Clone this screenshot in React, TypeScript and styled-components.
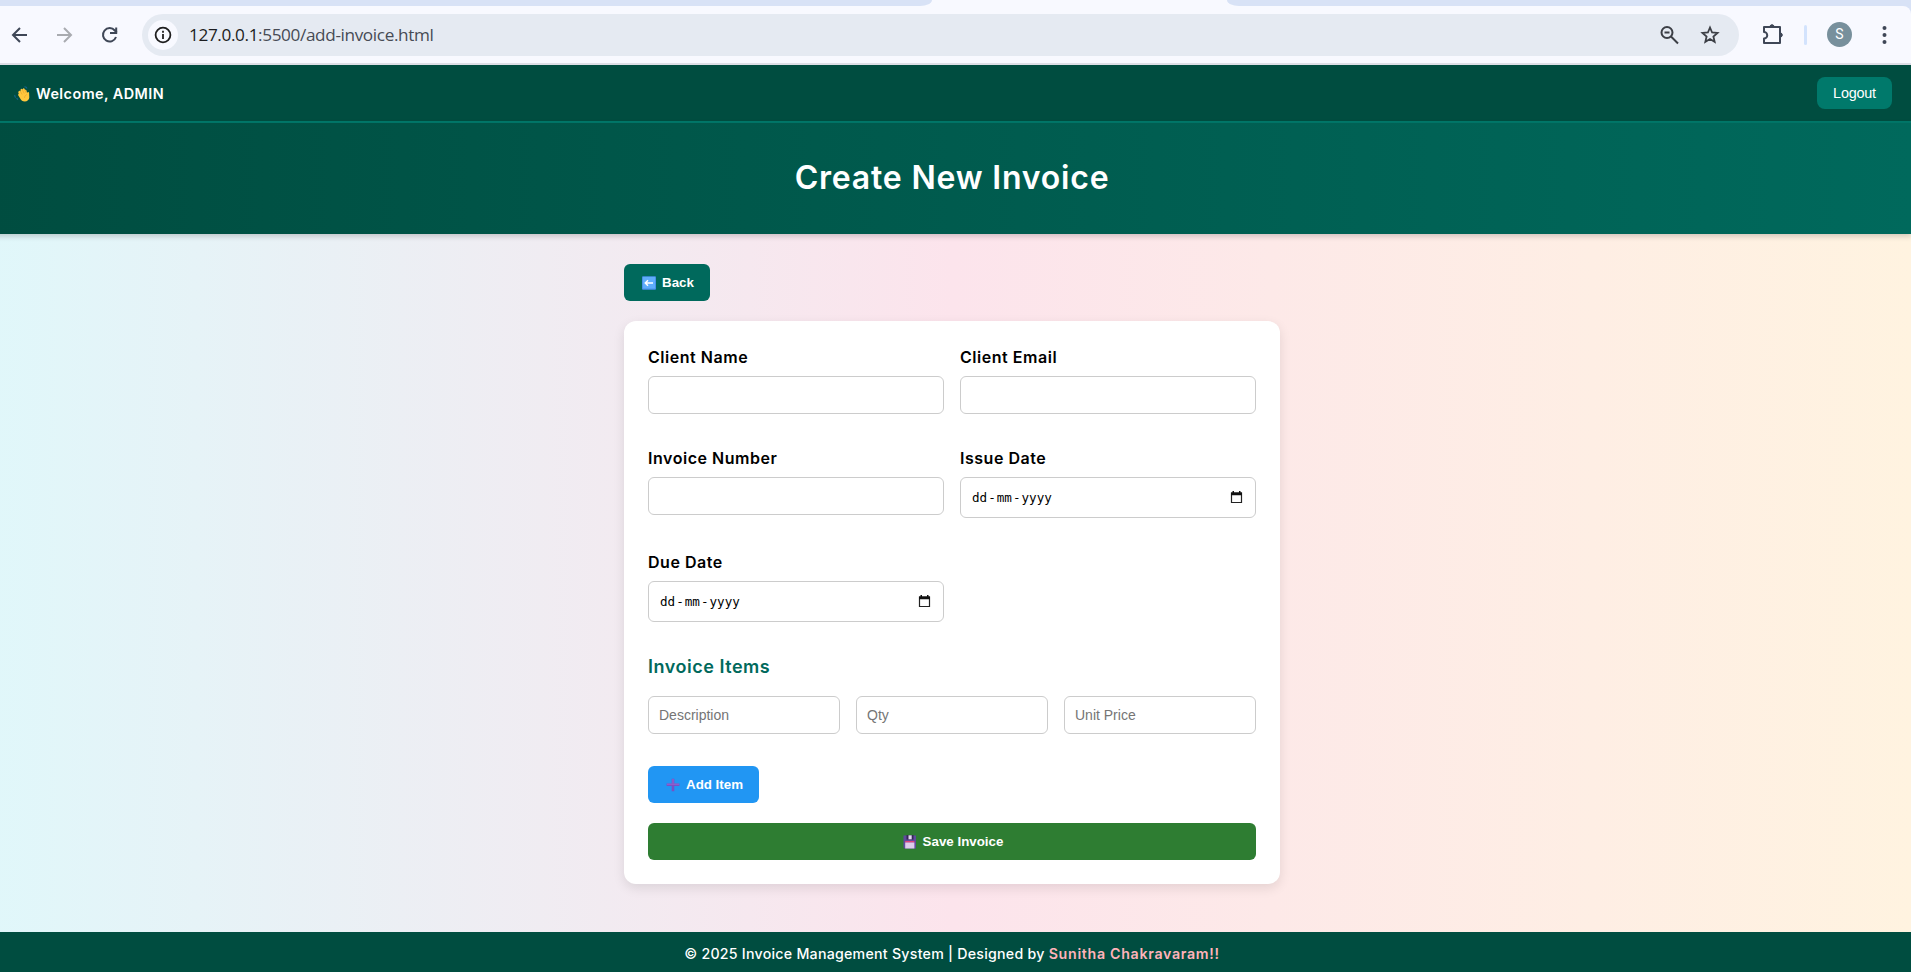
import React from 'react';
import styled, { createGlobalStyle } from 'styled-components';

const Global = createGlobalStyle`
  *, *::before, *::after { box-sizing: border-box; }
  body { margin: 0; overflow: hidden; background: #004d40; }
  button, input { margin: 0; }
`;

const display = "Inter, 'Liberation Sans', sans-serif";
const control = "'Liberation Sans', Arial, sans-serif";

const Window = styled.div`
  width: 100vw;
  height: 100vh;
  overflow: hidden;
  display: flex;
  flex-direction: column;
  background: #d8e2f6;
`;

const TabStrip = styled.div`
  height: 6px;
  flex: none;
  display: flex;
  justify-content: space-between;
  background: #f8f9ff;
`;

const InactiveTabs = styled.div<{ $width: number; $side: 'left' | 'right' }>`
  width: ${p => p.$width}px;
  background: #d8e2f6;
  border-radius: ${p => (p.$side === 'left' ? '0 0 14px 0 / 0 0 7px 0' : '0 0 0 14px / 0 0 0 7px')};
`;

const Toolbar = styled.div`
  height: 57px;
  flex: none;
  display: flex;
  align-items: center;
  padding: 0 24px 0 7px;
  background: #f8f9ff;
  border-top-right-radius: 8px;
`;

const ToolbarEdge = styled.div`
  height: 2px;
  flex: none;
  background: #dddee6;
`;

const NavIcons = styled.div`
  display: flex;
  gap: 19px;
  width: 135px;
  flex: none;
`;

const AddressBar = styled.div`
  flex: none;
  width: 1597px;
  height: 42px;
  display: flex;
  align-items: center;
  border-radius: 21px;
  background: #e5eaf2;
  padding: 0 17px 0 6px;
`;

const InfoBadge = styled.div`
  width: 30px;
  height: 30px;
  border-radius: 50%;
  background: #f8f9ff;
  display: flex;
  align-items: center;
  justify-content: center;
`;

const Url = styled.span`
  flex: 1;
  margin-left: 11px;
  font: 17.2px/24px 'Open Sans', 'Noto Sans', sans-serif;
  letter-spacing: -0.38px;
  color: #474b55;
  white-space: nowrap;
  b { font-weight: 400; color: #1c1d21; }
`;

const BarIcons = styled.div`
  display: flex;
  gap: 16px;
`;

const Extensions = styled.div`
  flex: 1;
  display: flex;
  align-items: center;
  justify-content: flex-end;
`;

const Divider = styled.div`
  width: 3px;
  height: 20px;
  border-radius: 2px;
  margin: 0 20px 0 20px;
  background: #d3e3fd;
`;

const Avatar = styled.div`
  width: 25px;
  height: 25px;
  border-radius: 50%;
  margin-right: 30px;
  background: #78909c;
  color: #fff;
  text-align: center;
  font: 14px/25px Roboto, sans-serif;
`;

const Page = styled.div`
  width: 1920px;
  flex: 1;
  margin-left: -8px;
  display: flex;
  flex-direction: column;
  background: linear-gradient(to right, #e0f7fa, #fce4ec, #fff3e0);
`;

const TopBar = styled.div`
  height: 58px;
  flex: none;
  display: flex;
  align-items: center;
  justify-content: space-between;
  padding: 0 20px;
  background: #004d40;
  border-bottom: 2px solid #00796b;
`;

const Welcome = styled.div`
  display: flex;
  align-items: center;
  gap: 6px;
  padding: 2px 0 0 2px;
  color: #fff;
  font: 600 14.4px/22px ${display};
  letter-spacing: 0.45px;
`;

const Logout = styled.button`
  width: 75px;
  height: 32px;
  border: 0;
  border-radius: 8px;
  background: #00796b;
  color: #fff;
  font: 14.4px/18px ${control};
  letter-spacing: -0.2px;
  padding: 0;
`;

const Banner = styled.header`
  height: 111px;
  flex: none;
  display: flex;
  align-items: center;
  justify-content: center;
  padding-bottom: 2px;
  background: linear-gradient(to right, #004d40, #00695c);
  box-shadow: 0 2px 6px rgba(0, 0, 0, 0.2);
`;

const Title = styled.h1`
  margin: 0;
  color: #fff;
  font: 600 32px/48px ${display};
  letter-spacing: 0.8px;
`;

const Main = styled.main`
  width: 656px;
  flex: 1;
  margin: 0 auto;
  padding-top: 30px;
  display: flex;
  flex-direction: column;
  align-items: flex-start;
`;

const Button = styled.button<{ $color: string; $wide?: boolean }>`
  height: 37px;
  flex: none;
  width: ${p => (p.$wide ? '100%' : 'auto')};
  display: flex;
  align-items: center;
  justify-content: center;
  gap: 6px;
  padding: 1px 16px 0 18px;
  border: 0;
  border-radius: 6px;
  background: ${p => p.$color};
  color: #fff;
  font: bold 13.333px/16px ${control};
`;

const Card = styled.form`
  width: 656px;
  margin-top: 20px;
  height: 563px;
  padding: 24px;
  display: flex;
  flex-direction: column;
  align-items: flex-start;
  background: #fff;
  border-radius: 12px;
  box-shadow: 0 4px 12px rgba(0, 0, 0, 0.1);
`;

const FieldGrid = styled.div`
  width: 100%;
  display: grid;
  grid-template-columns: 1fr 1fr;
  gap: 32px 16px;
`;

const Field = styled.label`
  display: flex;
  flex-direction: column;
  gap: 7px;
  color: #000;
  font: 600 16px/24px ${display};
  letter-spacing: 0.53px;
`;

const Input = styled.input`
  width: 100%;
  height: 38px;
  padding: 0 10px;
  border: 1px solid #ccc;
  border-radius: 6px;
  background: #fff;
  outline: 0;
  font: 14px/16px ${control};
  &::placeholder { color: #757575; opacity: 1; }
`;

const DateBox = styled.div`
  height: 41px;
  display: flex;
  align-items: center;
  padding: 0 12px 0 10px;
  border: 1px solid #ccc;
  border-radius: 6px;
  font: 12.6px/16px 'DejaVu Sans Mono', monospace;
  letter-spacing: 0;
  svg { margin-left: auto; }
`;

const DatePart = styled.span`
  padding: 0 1px;
`;

const SectionTitle = styled.h3`
  margin: 32px 0 16px;
  color: #00695c;
  font: 600 18px/26px ${display};
  letter-spacing: 0.52px;
`;

const ItemRow = styled.div`
  width: 100%;
  display: grid;
  grid-template-columns: repeat(3, 1fr);
  gap: 16px;
  margin-bottom: 32px;
`;

const SaveRow = styled.div`
  width: 100%;
  margin-top: 20px;
`;

const Footer = styled.footer`
  height: 40px;
  flex: none;
  padding-top: 11px;
  background: #004d40;
  color: #fff;
  text-align: center;
  font: 500 14.2px/22px ${display};
  letter-spacing: 0.25px;
  b { color: #ffb3ba; font-weight: 600; letter-spacing: 0.7px; }
`;

const strokeIcon = { fill: 'none', stroke: '#3f4757', strokeWidth: 2 } as const;

const BackIcon = () => (
  <svg width="26" height="26" viewBox="0 0 26 26" {...strokeIcon}><path d="M20 13H6M13 6l-7 7 7 7" /></svg>
);
const ForwardIcon = () => (
  <svg width="26" height="26" viewBox="0 0 26 26" {...strokeIcon} stroke="#a9abb0"><path d="M5 13h14M12 6l7 7-7 7" /></svg>
);
const ReloadIcon = () => (
  <svg width="26" height="26" viewBox="0 0 26 26" {...strokeIcon}>
    <path d="M19 15a6.700 6.700 0 1 1-1.200-6.500L20 10.800M19.200 5.500v5.500H13" />
  </svg>
);
const InfoIcon = () => (
  <svg width="18" height="18" viewBox="0 0 18 18" fill="none" stroke="#1f1f1f" strokeWidth="1.8">
    <circle cx="9" cy="9" r="7.400" /><path d="M9 8v5M9 4.800v2" />
  </svg>
);
const ZoomOutIcon = () => (
  <svg width="24" height="24" viewBox="0 0 24 24" fill="none" stroke="#3c3f46" strokeWidth="2">
    <circle cx="9" cy="9.500" r="5.500" /><path d="M13 13.500l7 7M6.500 9.500h5" />
  </svg>
);
const StarIcon = () => (
  <svg width="24" height="24" viewBox="0 0 24 24" fill="none" stroke="#3c3f46" strokeWidth="1.800">
    <path d="M12 4.500l2.100 5 5.400.450-4.100 3.550 1.250 5.250L12 15.950l-4.650 2.800L8.600 13.500 4.500 9.950l5.400-.450z" />
  </svg>
);
const PuzzleIcon = () => (
  <svg width="24" height="24" viewBox="0 0 24 24" fill="none" stroke="#3f4757" strokeWidth="2" strokeLinejoin="round">
    <path d="M4 4h16v16H4v-4.500a3 3 0 0 0 0-6.500z" />
    <path d="M10 3a2.200 2.200 0 0 1 4 0zM21 10a2.200 2.200 0 0 1 0 4z" fill="#3f4757" strokeWidth="1" />
  </svg>
);
const MenuIcon = () => (
  <svg width="5" height="20" viewBox="0 0 5 20" fill="#3f4757">
    <circle cx="2.500" cy="3" r="2" /><circle cx="2.500" cy="10" r="2" /><circle cx="2.500" cy="17" r="2" />
  </svg>
);
const WaveIcon = () => (
  <svg width="16" height="16" viewBox="0 0 16 16">
    <path d="M4.800 5.200c.5-.6 1.300-.3 1.600.3L6.600 3.600c.3-1 1.300-1 1.700-.2L9 2.700c.7-.7 1.500-.2 1.700.6l.3.500c.7-.4 1.300.1 1.500.8l.6 2.300c.2-1.300 1.900-1.400 2 .2l.2 4.400c-.1 2.400-2 3.900-4.500 3.900-2.300 0-3.600-1.300-4.600-3L4.200 9.300c-.4-.8 0-1.300.6-1.400l-.5-1.500c-.1-.5.1-.9.500-1.200z" fill="#ffc83d" />
    <path d="M6.400 5.500l1.800 3M8.300 3.500l1.900 4M10.700 3.500l1.500 3.500M10.500 12c.2-2 1-3 2.600-3.500" fill="none" stroke="#e59d2d" strokeWidth=".6" />
    <path d="M10.500.9q1.800-.2 2.500 1.600M.9 9q-.4 1.500.8 2.500M2.700 11.800q.2 1.300 1.400 1.800" fill="none" stroke="#14648b" strokeWidth="1.100" />
  </svg>
);
const ArrowTile = () => (
  <svg width="14" height="14" viewBox="0 0 14 14">
    <rect width="14" height="13.500" y=".2" rx="1" fill="#4a90ea" /><rect x="1" y="1" width="12" height="11.500" fill="#5fadfa" />
    <path d="M11 7H3.500M6 4.300L3.300 7 6 9.700" fill="none" stroke="#fff" strokeWidth="1.500" />
  </svg>
);
const PlusIcon = () => (
  <svg width="14" height="14" viewBox="0 0 14 14">
    <path d="M7 .8v12.400M.6 6.800h12.800" stroke="#7a4fc4" strokeWidth="2.600" />
    <path d="M7 1v4.500M1 6.200h12" stroke="#9468cf" strokeWidth="1" />
  </svg>
);
const FloppyIcon = () => (
  <svg width="14" height="14" viewBox="0 0 14 14">
    <path d="M.5.5h12.500v13H1.500l-1-1z" fill="#604a9e" />
    <path d="M3.500 0h7v4.600h-7z" fill="#342a55" /><path d="M5.500.3h3.200v4H5.500z" fill="#e4d9ef" />
    <path d="M2.200 6h9.200v1.600H2.200z" fill="#e0447c" /><path d="M2.200 7.500h9.200v6H2.200z" fill="#decdec" />
  </svg>
);
const CalendarIcon = () => (
  <svg width="13" height="13" viewBox="0 0 13 13">
    <path d="M1.500 2h10v9.500h-10z" fill="none" stroke="#222" strokeWidth="1.200" />
    <path d="M1 1.400h11v2.800H1zM2.500 0h1.500v2H2.500zM9 0h1.500v2H9z" fill="#111" />
  </svg>
);

const DateInput = () => (
  <DateBox>
    <DatePart>dd</DatePart>-<DatePart>mm</DatePart>-<DatePart>yyyy</DatePart>
    <CalendarIcon />
  </DateBox>
);

export default function App() {
  return (
    <Window>
      <Global />
      <TabStrip>
        <InactiveTabs $width={932} $side="left" />
        <InactiveTabs $width={684} $side="right" />
      </TabStrip>
      <Toolbar>
        <NavIcons><BackIcon /><ForwardIcon /><ReloadIcon /></NavIcons>
        <AddressBar>
          <InfoBadge><InfoIcon /></InfoBadge>
          <Url><b>127.0.0.1</b>:5500/add-invoice.html</Url>
          <BarIcons><ZoomOutIcon /><StarIcon /></BarIcons>
        </AddressBar>
        <Extensions><PuzzleIcon /><Divider /><Avatar>S</Avatar><MenuIcon /></Extensions>
      </Toolbar>
      <ToolbarEdge />
      <Page>
        <TopBar>
          <Welcome><WaveIcon />Welcome, ADMIN</Welcome>
          <Logout>Logout</Logout>
        </TopBar>
        <Banner><Title>Create New Invoice</Title></Banner>
        <Main>
          <Button $color="#00695c"><ArrowTile />Back</Button>
          <Card>
            <FieldGrid>
              <Field>Client Name<Input /></Field>
              <Field>Client Email<Input /></Field>
              <Field>Invoice Number<Input /></Field>
              <Field>Issue Date<DateInput /></Field>
              <Field>Due Date<DateInput /></Field>
            </FieldGrid>
            <SectionTitle>Invoice Items</SectionTitle>
            <ItemRow>
              <Input placeholder="Description" />
              <Input placeholder="Qty" />
              <Input placeholder="Unit Price" />
            </ItemRow>
            <Button type="button" $color="#2196f3"><PlusIcon />Add Item</Button>
            <SaveRow><Button type="button" $color="#2e7d32" $wide><FloppyIcon />Save Invoice</Button></SaveRow>
          </Card>
        </Main>
        <Footer>© 2025 Invoice Management System | Designed by <b>Sunitha Chakravaram!!</b></Footer>
      </Page>
    </Window>
  );
}
